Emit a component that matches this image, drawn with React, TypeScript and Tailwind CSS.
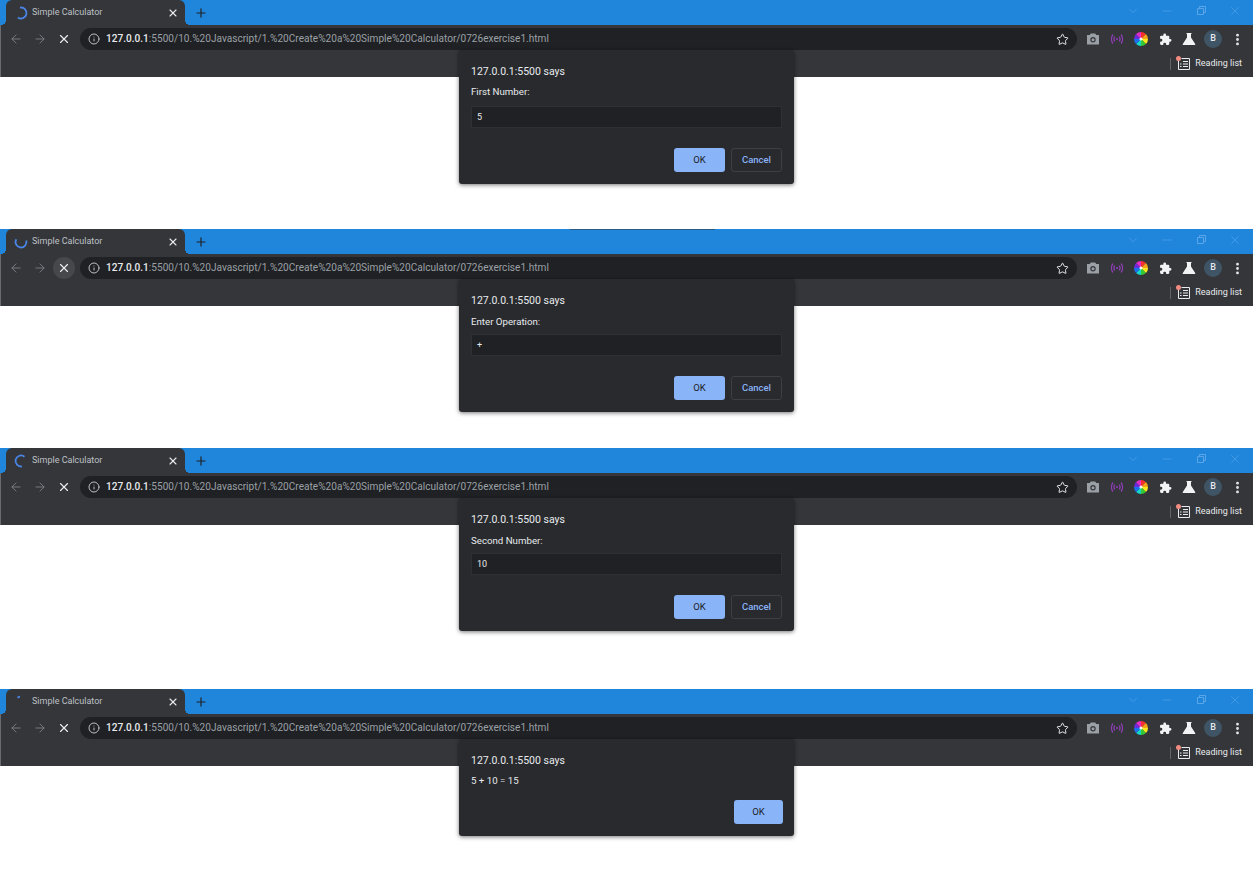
import React from 'react';
import { ArrowLeft, ArrowRight, X, Info, Star, MoreVertical, ChevronDown, Minus, Plus } from 'lucide-react';

// --- Types ---
interface BrowserWindow {
  id: string;
  height: string;
  spinner: [number, number];
  message: string;
  inputValue?: string;
  stopHover?: boolean;
  labelGap?: string;
  inputGap?: string;
}

const windows: BrowserWindow[] = [
  { id: '1', height: 'h-[229px]', spinner: [-10, 215], message: 'First Number:', inputValue: '5', labelGap: 'mt-[5px]', inputGap: 'mt-[7px]' },
  { id: '2', height: 'h-[219px]', spinner: [75, 300], message: 'Enter Operation:', inputValue: '+', stopHover: true, labelGap: 'mt-[6px]', inputGap: 'mt-[5px]' },
  { id: '3', height: 'h-[241px]', spinner: [170, 400], message: 'Second Number:', inputValue: '10', labelGap: 'mt-[6px]', inputGap: 'mt-[5px]' },
  { id: '4', height: 'h-[194px]', spinner: [-40, -10], message: '5 + 10 = 15' },
];

const polar = (deg: number, r: number, c = 8) => {
  const rad = ((deg - 90) * Math.PI) / 180;
  return `${(c + r * Math.cos(rad)).toFixed(2)} ${(c + r * Math.sin(rad)).toFixed(2)}`;
};

const Spinner = ({ from, to }: { from: number; to: number }) => (
  <svg width="16" height="16" viewBox="0 0 16 16" fill="none" className="shrink-0">
    <path
      d={`M${polar(from, 5.5)} A5.5 5.5 0 ${to - from > 180 ? 1 : 0} 1 ${polar(to, 5.5)}`}
      stroke="#4a86e8"
      strokeWidth="1.8"
    />
  </svg>
);

const ColorWheel = () => {
  const colors = ['#f4312d', '#f7a21b', '#f6ea1f', '#35c935', '#16d6c8', '#1d6ff2', '#6b2bd9', '#e52bc8'];
  return (
    <svg width="14" height="14" viewBox="0 0 16 16">
      {colors.map((color, i) => (
        <path key={color} d={`M8 8 L${polar(i * 45, 8)} A8 8 0 0 1 ${polar((i + 1) * 45, 8)} Z`} fill={color} />
      ))}
      <circle cx="8" cy="8" r="1.8" fill="#f4f4f4" />
    </svg>
  );
};

const ToolbarIcons = () => (
  <div className="flex items-center pl-1 pr-1">
    <div className="w-6 h-6 flex items-center justify-center">
      <svg width="14" height="14" viewBox="0 0 14 14">
        <path
          fillRule="evenodd"
          fill="#9aa0a6"
          d="M4.8 1.5h4.4l1 1.5H13v9.5H1V3h2.8zM7 5a2.7 2.7 0 1 0 0 5.4A2.7 2.7 0 0 0 7 5z"
        />
        <circle cx="7" cy="7.7" r="1.5" fill="#9aa0a6" />
      </svg>
    </div>
    <div className="w-6 h-6 flex items-center justify-center">
      <svg width="14" height="12" viewBox="0 0 14 12" fill="none" stroke="#8e3fb5" strokeWidth="1.2">
        <path d="M3 1.5C.9 4 .9 8 3 10.5M11 1.5c2.1 2.5 2.1 6.5 0 9M4.8 3.5c-1 1.4-1 3.6 0 5M9.2 3.5c1 1.4 1 3.6 0 5" />
        <circle cx="7" cy="6" r="1.1" fill="#8e3fb5" stroke="none" />
      </svg>
    </div>
    <div className="w-6 h-6 flex items-center justify-center">
      <ColorWheel />
    </div>
    <div className="w-6 h-6 flex items-center justify-center">
      <svg width="13" height="13" viewBox="0 0 24 24" fill="#f1f3f4">
        <path d="M20.5 11H19V7a2 2 0 0 0-2-2h-4V3.5a2.5 2.5 0 0 0-5 0V5H4a2 2 0 0 0-2 2v3.8h1.5a2.7 2.7 0 0 1 0 5.4H2V20a2 2 0 0 0 2 2h3.8v-1.5a2.7 2.7 0 0 1 5.4 0V22H17a2 2 0 0 0 2-2v-4h1.5a2.5 2.5 0 0 0 0-5z" />
      </svg>
    </div>
    <div className="w-6 h-6 flex items-center justify-center">
      <svg width="14" height="14" viewBox="0 0 14 14" fill="#f1f3f4">
        <path d="M4.5 1h5v1H9v3.6l4.2 6.4c.3.5 0 1-.6 1H1.4c-.6 0-.9-.5-.6-1L5 5.6V2h-.5z" />
      </svg>
    </div>
    <div className="w-6 h-6 flex items-center justify-center">
      <div className="w-[18px] h-[18px] rounded-full bg-[#3f5566] flex items-center justify-center text-[9px] font-medium text-[#e8eaed]">B</div>
    </div>
    <div className="w-6 h-6 flex items-center justify-center">
      <MoreVertical className="w-[15px] h-[15px] text-[#e8eaed]" strokeWidth={2.5} />
    </div>
  </div>
);

const ReadingList = () => (
  <div className="h-[24px] pb-[3px] flex items-center justify-end pr-[11px]">
    <div className="w-px h-[12px] bg-[#5f6368] mr-[6px]" />
    <div className="relative w-[13px] h-[13px] mr-[5px]">
      <svg width="13" height="13" viewBox="0 0 13 13" fill="none" stroke="#e8eaed" strokeWidth="1">
        <path d="M1.5 2.5v10h11v-11h-8M6 4.5h5M6 7h5M6 9.5h5M3 7h1.5M3 9.5h1.5" />
      </svg>
      <div className="absolute -top-[1px] -left-[1px] w-[5px] h-[5px] rounded-full bg-[#f28b82]" />
    </div>
    <span className="pt-px text-[9px] text-[#e8eaed]">Reading list</span>
  </div>
);

const Dialog = ({ win }: { win: BrowserWindow }) => (
  <div className="absolute top-[50px] left-[459px] w-[335px] bg-[#292a2d] rounded-[3px] shadow-[0_1px_4px_rgba(0,0,0,0.55)] pt-[14px] px-3 pb-3">
    <div className="text-[10.5px] leading-[16px] text-[#e8eaed]">127.0.0.1:5500 says</div>
    {win.inputValue !== undefined ? (
      <>
        <div className={`${win.labelGap} text-[9.7px] leading-[14px] text-[#e8eaed]`}>{win.message}</div>
        <div className={`${win.inputGap} h-[22px] pt-px bg-[#202124] border border-[#2f3033] flex items-center px-[5px] text-[9px] text-[#e8eaed]`}>
          {win.inputValue}
        </div>
        <div className="mt-5 flex justify-end gap-[6px]">
          <button className="w-[51px] h-[24px] rounded-[3px] bg-[#8ab4f8] text-[9.5px] text-[#202124]">OK</button>
          <button className="w-[51px] h-[24px] rounded-[3px] border border-[#3c4043] text-[9.5px] font-medium text-[#8ab4f8]">Cancel</button>
        </div>
      </>
    ) : (
      <>
        <div className="mt-[4px] pt-px text-[9.7px] leading-[14px] text-[#e8eaed]">{win.message}</div>
        <div className="mt-[12px] flex justify-end -mr-px">
          <button className="w-[49px] h-[24px] rounded-[3px] bg-[#8ab4f8] text-[9.5px] text-[#202124]">OK</button>
        </div>
      </>
    )}
  </div>
);

const Window = ({ win }: { win: BrowserWindow }) => (
  <section className={`relative ${win.height}`}>
    {/* Tab strip */}
    <div className="h-[25px] bg-[#2086dc] flex items-end pl-[6px]">
      <div className="relative w-[179px] h-[25px] bg-[#35363a] rounded-t-[6px] flex items-center pl-[7px] pr-[6px]">
        <div className="absolute bottom-0 -left-[5px] w-[5px] h-[5px] bg-[radial-gradient(circle_at_0_0,transparent_5px,#35363a_5px)]" />
        <div className="absolute bottom-0 -right-[5px] w-[5px] h-[5px] bg-[radial-gradient(circle_at_100%_0,transparent_5px,#35363a_5px)]" />
        <Spinner from={win.spinner[0]} to={win.spinner[1]} />
        <span className="ml-[3px] pt-px flex-1 text-[9px] text-[#bdc1c6]">Simple Calculator</span>
        <X className="w-3 h-3 text-[#e8eaed]" strokeWidth={2.2} />
      </div>
      <div className="h-[25px] ml-[9px] flex items-center">
        <Plus className="w-[14px] h-[14px] text-[#202124]" strokeWidth={2} />
      </div>
      <div className="flex-1 h-[21px] self-start flex items-center justify-end pr-px text-[#5aa6e8]">
        <div className="w-[34px] flex justify-center">
          <ChevronDown className="w-[14px] h-[14px]" strokeWidth={1} />
        </div>
        <div className="w-[34px] flex justify-center">
          <Minus className="w-[14px] h-[14px]" strokeWidth={1} />
        </div>
        <div className="w-[34px] flex justify-center">
          <svg width="9" height="9" viewBox="0 0 9 9" fill="none" stroke="currentColor">
            <path d="M.5 2.5h6v6h-6zM2.5 2.5v-2h6v6h-2" />
          </svg>
        </div>
        <div className="w-[34px] flex justify-center">
          <X className="w-[14px] h-[14px]" strokeWidth={1} />
        </div>
      </div>
    </div>
    {/* stray shadow line on the second capture */}
    {win.stopHover && <div className="absolute top-0 left-[570px] w-[145px] h-px bg-[#2a5d85]" />}

    {/* Toolbar */}
    <div className="bg-[#35363a] h-[52px] border-l border-[#6a6b6e]">
      <div className="h-[28px] flex items-center">
        <div className="flex items-center pl-[3px]">
          <div className="w-6 h-6 flex items-center justify-center">
            <ArrowLeft className="w-[14px] h-[14px] text-[#7a7d81]" strokeWidth={1.6} />
          </div>
          <div className="w-6 h-6 flex items-center justify-center">
            <ArrowRight className="w-[14px] h-[14px] text-[#7a7d81]" strokeWidth={1.6} />
          </div>
          <div className={`w-[22px] h-[22px] mx-px rounded-full flex items-center justify-center ${win.stopHover ? 'bg-[#47484c]' : ''}`}>
            <X className="w-[14px] h-[14px] text-[#e8eaed]" strokeWidth={2} />
          </div>
        </div>
        <div className="ml-1 flex-1 h-[22px] rounded-full bg-[#202124] flex items-center pl-2 pr-2">
          <Info className="w-3 h-3 text-[#bdc1c6]" strokeWidth={2} />
          <div className="ml-[6px] flex-1 text-[10.1px] text-[#9aa0a6] whitespace-nowrap">
            <span className="font-medium text-[#e8eaed]">127.0.0.1</span>:5500/10.%20Javascript/1.%20Create%20a%20Simple%20Calculator/0726exercise1.html
          </div>
          <Star className="w-[13px] h-[13px] text-[#e8eaed]" strokeWidth={1.8} />
        </div>
        <ToolbarIcons />
      </div>
      <ReadingList />
    </div>

    <Dialog win={win} />
  </section>
);

const App: React.FC = () => (
  <div className="min-h-[883px] bg-white font-['Roboto','Noto_Sans',sans-serif] overflow-hidden">
    {windows.map((win) => (
      <Window key={win.id} win={win} />
    ))}
  </div>
);

export default App;
